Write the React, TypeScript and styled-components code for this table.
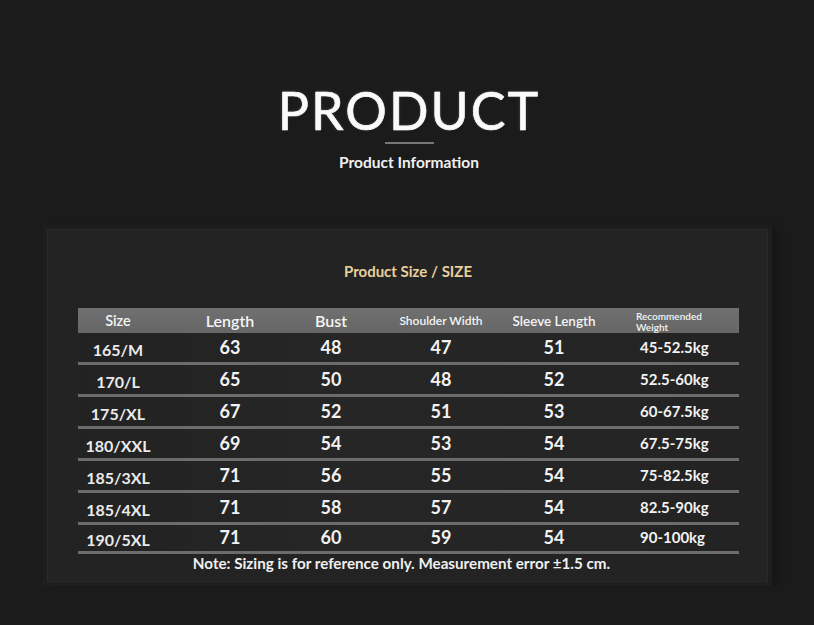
import React, { FC } from "react";
import styled, { createGlobalStyle } from "styled-components";

const rows = [
  { size: "165/M", length: 63, bust: 48, shoulder: 47, sleeve: 51, weight: "45-52.5kg" },
  { size: "170/L", length: 65, bust: 50, shoulder: 48, sleeve: 52, weight: "52.5-60kg" },
  { size: "175/XL", length: 67, bust: 52, shoulder: 51, sleeve: 53, weight: "60-67.5kg" },
  { size: "180/XXL", length: 69, bust: 54, shoulder: 53, sleeve: 54, weight: "67.5-75kg" },
  { size: "185/3XL", length: 71, bust: 56, shoulder: 55, sleeve: 54, weight: "75-82.5kg" },
  { size: "185/4XL", length: 71, bust: 58, shoulder: 57, sleeve: 54, weight: "82.5-90kg" },
  { size: "190/5XL", length: 71, bust: 60, shoulder: 59, sleeve: 54, weight: "90-100kg" },
];

const App: FC = () => {
  return (
    <Page>
      <GlobalStyle />
      <Heading>
        <BigTitle>PRODUCT</BigTitle>
        <Rule />
        <Subtitle>Product Information</Subtitle>
      </Heading>

      <Panel>
        <PanelTitle>Product Size / SIZE</PanelTitle>
        <Table>
          <HeadRow>
            <Cell>Size</Cell>
            <Cell $size={16}>Length</Cell>
            <Cell $size={16}>Bust</Cell>
            <Cell $size={12}>Shoulder Width</Cell>
            <Cell $size={13.5}>Sleeve Length</Cell>
            <WeightHead>
              Recommended
              <br />
              Weight
            </WeightHead>
          </HeadRow>
          {rows.map((r, i) => (
            <Row key={r.size} $last={i === rows.length - 1}>
              <SizeCell>{r.size}</SizeCell>
              <Cell>{r.length}</Cell>
              <Cell>{r.bust}</Cell>
              <Cell>{r.shoulder}</Cell>
              <Cell>{r.sleeve}</Cell>
              <WeightCell>{r.weight}</WeightCell>
            </Row>
          ))}
        </Table>
        <Note>Note: Sizing is for reference only. Measurement error ±1.5 cm.</Note>
      </Panel>
    </Page>
  );
};

const GlobalStyle = createGlobalStyle`
  html, body {
    margin: 0;
    padding: 0;
    background: #1b1b1b;
  }
  body {
    font-family: Lato, "Open Sans", "Liberation Sans", sans-serif;
    color: #f2f2f2;
  }
`;

const Page = styled.div`
  width: 814px;
  height: 625px;
  overflow: hidden;
  background: #1b1b1b;
  display: flex;
  flex-direction: column;
  align-items: center;
`;

const Heading = styled.div`
  display: flex;
  flex-direction: column;
  align-items: center;
  padding-top: 80px;
  margin-left: 4px;
`;

const BigTitle = styled.h1`
  margin: 0;
  font-family: Lato, sans-serif;
  font-weight: 400;
  font-size: 52px;
  line-height: 60px;
  letter-spacing: 2px;
  color: #fafafa;
  -webkit-text-stroke: 0.6px #fafafa;
  text-shadow: 0 0 3px rgba(255, 255, 255, 0.3), 1px 1px 2px rgba(0, 0, 0, 0.8);
`;

const Rule = styled.div`
  width: 49px;
  height: 2px;
  background: #777;
  margin-top: 2px;
`;

const Subtitle = styled.div`
  margin-top: 9px;
  font-size: 15.5px;
  font-weight: 700;
  color: #f0f0f0;
`;

const Panel = styled.div`
  margin-top: 58px;
  width: 721px;
  height: 353px;
  box-sizing: border-box;
  margin-left: 1px;
  background: #232323;
  border: 1px solid #2a2a2a;
  box-shadow: 0 0 0 4px #1e1e1e, 8px 0 10px rgba(0, 0, 0, 0.35);
  padding: 31px 28px 0 30px;
  display: flex;
  flex-direction: column;
`;

const PanelTitle = styled.div`
  align-self: center;
  font-size: 15px;
  font-weight: 700;
  color: #e9d09c;
  line-height: 20px;
  margin-left: -1px;
`;

const Table = styled.div`
  margin-top: 27px;
  width: 661px;
  display: flex;
  flex-direction: column;
`;

const grid = `
  display: grid;
  grid-template-columns: 80px 144px 58px 162px 64px 1fr;
  align-items: center;
`;

const HeadRow = styled.div`
  ${grid}
  height: 25px;
  background: linear-gradient(180deg, #707070 0%, #666 100%);
  font-size: 14.5px;
  font-weight: 600;
  color: #f4f4f4;
`;

const Row = styled.div<{ $last?: boolean }>`
  ${grid}
  height: ${(p) => (p.$last ? "22px" : "27px")};
  padding-bottom: ${(p) => (p.$last ? "4px" : "2px")};
  border-bottom: 3px solid #6c6c6c;
  font-size: 18px;
  font-weight: 700;
  color: #f2f2f2;
  background: linear-gradient(90deg, #222 0%, #262626 40%, #232323 100%);
`;

const Cell = styled.div<{ $size?: number }>`
  display: flex;
  justify-content: center;
  white-space: nowrap;
  font-size: ${(p) => (p.$size ? `${p.$size}px` : "inherit")};
`;

const SizeCell = styled(Cell)`
  font-size: 16px;
  padding-top: 5px;
  color: #eaeaea;
`;

const WeightHead = styled.div`
  padding-left: 50px;
  font-size: 10px;
  font-weight: 600;
  line-height: 11px;
  padding-top: 2px;
`;

const WeightCell = styled.div`
  padding-left: 54px;
  font-size: 15px;
  font-weight: 700;
  white-space: nowrap;
`;

const Note = styled.div`
  align-self: center;
  margin-left: -14px;
  font-size: 15.2px;
  font-weight: 700;
  color: #f0f0f0;
  line-height: 18px;
`;

export default App;
